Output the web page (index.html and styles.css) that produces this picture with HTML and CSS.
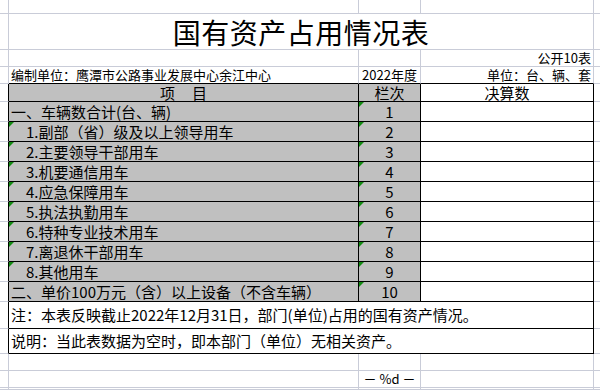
FILE: index.html
```html
<!DOCTYPE html>
<html lang="zh-CN">
<head>
<meta charset="utf-8">
<title>国有资产占用情况表</title>
<link rel="stylesheet" href="styles.css">
</head>
<body>
<div class="sheet">
  <!-- row 1 -->
  <div class="c ca"></div>
  <div class="c"></div>
  <div class="c"></div>
  <div class="c"></div>
  <div class="c ce"></div>
  <!-- row 2 title -->
  <div class="c ca"></div>
  <div class="c title span3">国有资产占用情况表</div>
  <div class="c ce"></div>
  <!-- row 3 -->
  <div class="c ca"></div>
  <div class="c"></div>
  <div class="c"></div>
  <div class="c small right">公开10表</div>
  <div class="c ce"></div>
  <!-- row 4 -->
  <div class="c ca"></div>
  <div class="c small tb left">编制单位：鹰潭市公路事业发展中心余江中心</div>
  <div class="c small tb center">2022年度</div>
  <div class="c small tb right">单位：台、辆、套</div>
  <div class="c ce"></div>
  <!-- row 5 header -->
  <div class="c ca tl"></div>
  <div class="c t gray center">项&nbsp;&nbsp;&nbsp;&nbsp;&nbsp;目</div>
  <div class="c t gray center">栏次</div>
  <div class="c t center">决算数</div>
  <div class="c ce"></div>
  <!-- data rows -->
  <div class="c ca tl"></div>
  <div class="c t gray left">一、车辆数合计(台、辆)</div>
  <div class="c t gray center mark">1</div>
  <div class="c t"></div>
  <div class="c ce"></div>

  <div class="c ca tl"></div>
  <div class="c t gray left sub mark">1.副部（省）级及以上领导用车</div>
  <div class="c t gray center mark">2</div>
  <div class="c t"></div>
  <div class="c ce"></div>

  <div class="c ca tl"></div>
  <div class="c t gray left sub mark">2.主要领导干部用车</div>
  <div class="c t gray center mark">3</div>
  <div class="c t"></div>
  <div class="c ce"></div>

  <div class="c ca tl"></div>
  <div class="c t gray left sub mark">3.机要通信用车</div>
  <div class="c t gray center mark">4</div>
  <div class="c t"></div>
  <div class="c ce"></div>

  <div class="c ca tl"></div>
  <div class="c t gray left sub mark">4.应急保障用车</div>
  <div class="c t gray center mark">5</div>
  <div class="c t"></div>
  <div class="c ce"></div>

  <div class="c ca tl"></div>
  <div class="c t gray left sub mark">5.执法执勤用车</div>
  <div class="c t gray center mark">6</div>
  <div class="c t"></div>
  <div class="c ce"></div>

  <div class="c ca tl"></div>
  <div class="c t gray left sub mark">6.特种专业技术用车</div>
  <div class="c t gray center mark">7</div>
  <div class="c t"></div>
  <div class="c ce"></div>

  <div class="c ca tl"></div>
  <div class="c t gray left sub mark">7.离退休干部用车</div>
  <div class="c t gray center mark">8</div>
  <div class="c t"></div>
  <div class="c ce"></div>

  <div class="c ca tl"></div>
  <div class="c t gray left sub mark">8.其他用车</div>
  <div class="c t gray center mark">9</div>
  <div class="c t"></div>
  <div class="c ce"></div>

  <div class="c ca tl"></div>
  <div class="c t gray left">二、单价100万元（含）以上设备（不含车辆）</div>
  <div class="c t gray center mark">10</div>
  <div class="c t"></div>
  <div class="c ce"></div>
  <!-- notes -->
  <div class="c ca tl"></div>
  <div class="c t span3 left">注：本表反映截止2022年12月31日，部门(单位)占用的国有资产情况。</div>
  <div class="c ce"></div>

  <div class="c ca tl"></div>
  <div class="c t span3 left">说明：当此表数据为空时，即本部门（单位）无相关资产。</div>
  <div class="c ce"></div>
  <!-- trailing rows -->
  <div class="c ca"></div>
  <div class="c"></div>
  <div class="c"></div>
  <div class="c"></div>
  <div class="c ce"></div>

  <div class="c ca"></div>
  <div class="c"></div>
  <div class="c small center">－ %d －</div>
  <div class="c"></div>
  <div class="c ce"></div>

  <div class="c ca"></div>
  <div class="c"></div>
  <div class="c"></div>
  <div class="c"></div>
  <div class="c ce"></div>
</div>
</body>
</html>
```

FILE: styles.css
```css
html, body {
  margin: 0;
  padding: 0;
  background: #ffffff;
}
body {
  width: 600px;
  height: 390px;
  overflow: hidden;
  font-family: "Noto Sans CJK SC", "Noto Sans", sans-serif;
  color: #000000;
}
.sheet {
  display: grid;
  grid-template-columns: 9px 350px 62px 173px 1fr;
  grid-template-rows: 14px 36px 17px 17px 18px repeat(10, 20px) 27px 25px 17px 17px 1fr;
  width: 600px;
  height: 390px;
}
.c {
  box-sizing: border-box;
  border-right: 1px solid #c9ccd8;
  border-bottom: 1px solid #c9ccd8;
  display: flex;
  align-items: center;
  white-space: nowrap;
  font-size: 15px;
  line-height: 16px;
  position: relative;
  min-width: 0;
}
.ce { border-right: none; }
.ca.tl { border-right-color: #000000; }
.t {
  border-right-color: #000000;
  border-bottom-color: #000000;
}
.tb { border-bottom-color: #000000; }
.gray { background: #c0c0c0; }
.span3 { grid-column: span 3; }
.left { justify-content: flex-start; padding-left: 2px; }
.center { justify-content: center; }
.right { justify-content: flex-end; padding-right: 2px; }
.sub { padding-left: 17px; }
.small {
  font-size: 13px;
  line-height: 14px;
  align-items: flex-end;
  padding-bottom: 1px;
}
.title {
  font-size: 28px;
  line-height: 32px;
  justify-content: center;
  align-items: flex-end;
  padding-bottom: 1px;
  letter-spacing: 0.5px;
}
.mark::before {
  content: "";
  position: absolute;
  top: 0;
  left: 0;
  width: 0;
  height: 0;
  border-top: 5px solid #118a11;
  border-right: 5px solid transparent;
}
```
